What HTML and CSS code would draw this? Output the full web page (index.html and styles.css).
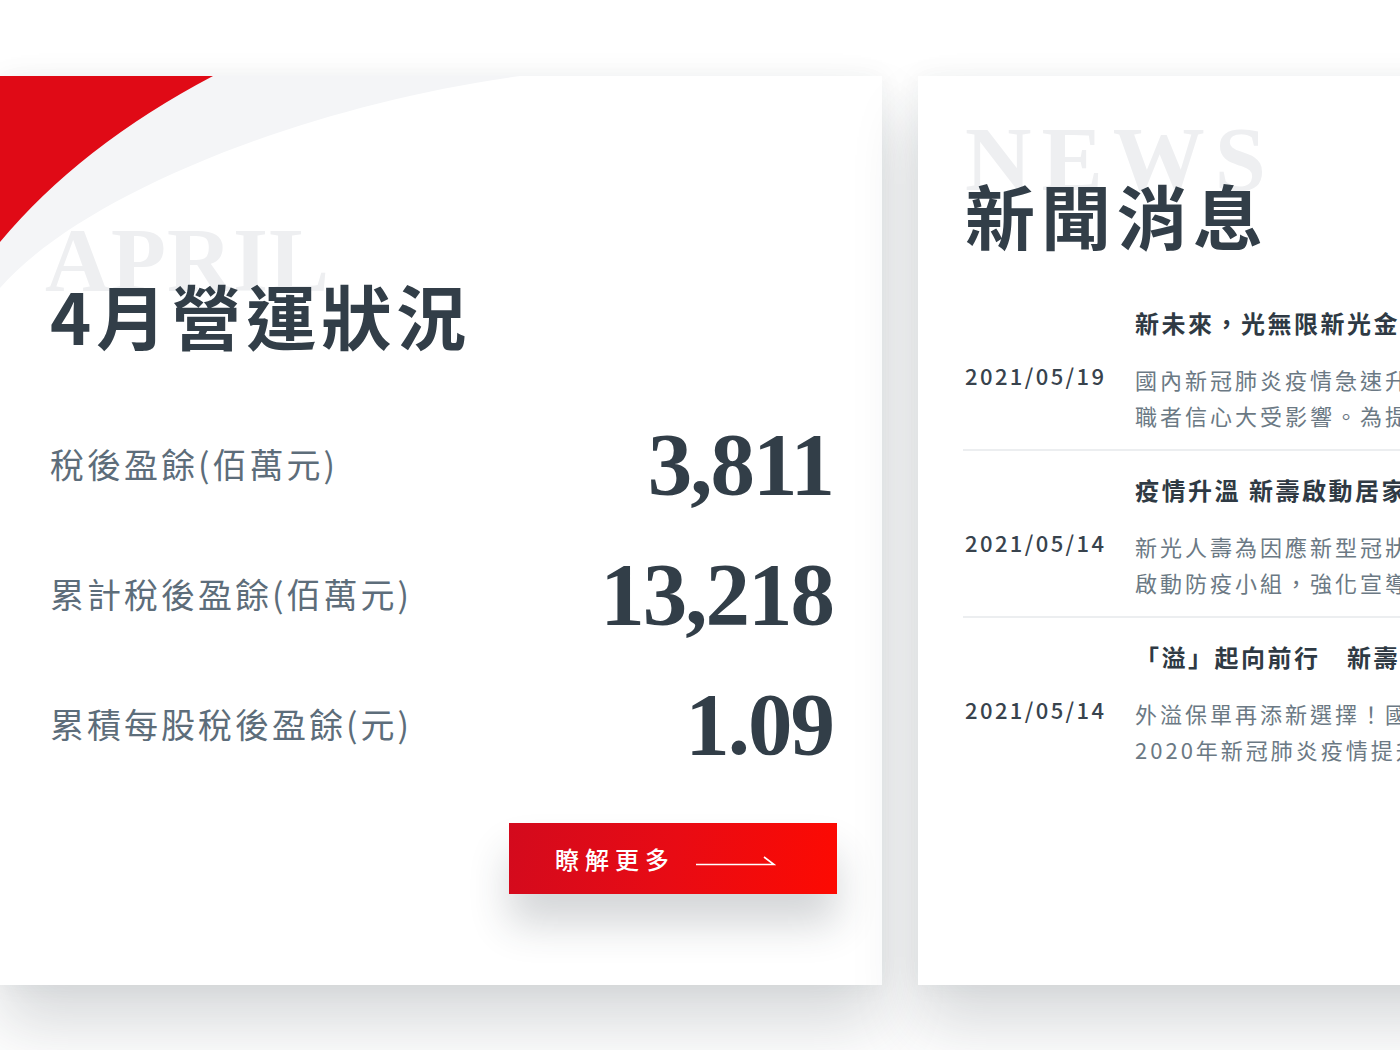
FILE: index.html
```
<!DOCTYPE html>
<html lang="zh-Hant">
<head>
<meta charset="utf-8">
<title>4月營運狀況 / 新聞消息</title>
<link rel="stylesheet" href="styles.css">
</head>
<body>
<div class="page">
  <section class="card report">
    <svg class="swoosh" width="882" height="300" viewBox="0 0 882 300" aria-hidden="true">
      <path d="M0,0 L520,0 C300,30 80,120 0,212 Z" fill="#f4f5f7"/>
      <path d="M0,0 L213,0 Q80,70 0,166 Z" fill="#e00a16"/>
    </svg>
    <div class="heading">
      <span class="watermark wm-april">APRIL</span>
      <h1 class="title">4月營運狀況</h1>
    </div>
    <div class="stats">
      <div class="stat-label">稅後盈餘(佰萬元)</div>
      <div class="stat-value">3,811</div>
      <div class="stat-label">累計稅後盈餘(佰萬元)</div>
      <div class="stat-value">13,218</div>
      <div class="stat-label">累積每股稅後盈餘(元)</div>
      <div class="stat-value">1.09</div>
    </div>
    <div class="actions">
      <a class="more-btn" href="#">
        <span class="more-text">瞭解更多</span>
        <svg class="arrow" width="80" height="12" viewBox="0 0 80 12" aria-hidden="true">
          <path d="M0,10.5 H78 L68,3" fill="none" stroke="#fff" stroke-width="1.6"/>
        </svg>
      </a>
    </div>
  </section>

  <section class="card news">
    <div class="heading">
      <span class="watermark wm-news">NEWS</span>
      <h2 class="title news-title">新聞消息</h2>
    </div>
    <ul class="news-list">
      <li class="news-item">
        <div class="news-date">2021/05/19</div>
        <div class="news-body">
          <div class="news-head">新未來，光無限新光金控全力支持防疫</div>
          <p class="news-desc">國內新冠肺炎疫情急速升溫，民眾對防疫需求大增<br>職者信心大受影響。為提振士氣並守護同仁健康</p>
        </div>
      </li>
      <li class="news-item">
        <div class="news-date">2021/05/14</div>
        <div class="news-body">
          <div class="news-head">疫情升溫 新壽啟動居家辦公分流</div>
          <p class="news-desc">新光人壽為因應新型冠狀病毒疫情升溫，即刻<br>啟動防疫小組，強化宣導各項防疫措施與應變</p>
        </div>
      </li>
      <li class="news-item">
        <div class="news-date">2021/05/14</div>
        <div class="news-body">
          <div class="news-head">「溢」起向前行　新壽推出外溢保單</div>
          <p class="news-desc">外溢保單再添新選擇！國人健康意識抬頭，<br>2020年新冠肺炎疫情提升民眾對健康的重視</p>
        </div>
      </li>
    </ul>
  </section>
</div>
</body>
</html>
```

FILE: styles.css
```
html, body {
  margin: 0;
  padding: 0;
  background: #ffffff;
}

body {
  width: 1400px;
  height: 1050px;
  overflow: hidden;
  font-family: "Noto Sans CJK TC", "Noto Sans", sans-serif;
  color: #323e48;
}

.page {
  display: flex;
  gap: 36px;
  padding-top: 76px;
  width: 1400px;
  box-sizing: border-box;
}

.card {
  position: relative;
  flex-shrink: 0;
  height: 909px;
  background: #ffffff;
  box-shadow: 0 40px 60px rgba(40, 50, 60, 0.18), 0 0 24px rgba(40, 50, 60, 0.05);
  box-sizing: border-box;
}

.report {
  width: 882px;
  padding: 204px 45px 0 50px;
  overflow: hidden;
}

.swoosh {
  position: absolute;
  left: 0;
  top: 0;
}

.heading {
  position: relative;
}

.watermark {
  position: absolute;
  font-family: "Liberation Serif", "Times New Roman", serif;
  font-weight: 700;
  line-height: 1;
  color: #eeeff1;
  white-space: nowrap;
}

.wm-april {
  top: -64px;
  left: -5px;
  font-size: 90px;
  letter-spacing: 1px;
}

.title {
  position: relative;
  margin: 0;
  font-family: "Noto Sans CJK TC", sans-serif;
  font-weight: 700;
  font-size: 70px;
  line-height: 1;
  letter-spacing: 5px;
  color: #323e48;
}

.stats {
  display: grid;
  grid-template-columns: 1fr auto;
  grid-auto-rows: 130px;
  align-items: center;
  margin-top: 49px;
  position: relative;
}

.stat-label {
  font-size: 34px;
  line-height: 1;
  letter-spacing: 3px;
  color: #5d6d7a;
  font-weight: 400;
}

.stat-value {
  font-family: "Liberation Serif", "Times New Roman", serif;
  font-weight: 700;
  font-size: 89px;
  line-height: 1;
  letter-spacing: -2px;
  color: #323e48;
  text-align: right;
  padding-right: 4px;
}

.actions {
  display: flex;
  justify-content: flex-end;
  margin-top: 34px;
}

.more-btn {
  display: flex;
  align-items: center;
  width: 328px;
  height: 71px;
  box-sizing: border-box;
  padding-left: 46px;
  gap: 21px;
  text-decoration: none;
  color: #ffffff;
  background: linear-gradient(100deg, #d30a1d 0%, #e80b14 50%, #fd0a02 100%);
  box-shadow: 0 30px 40px rgba(40, 50, 60, 0.2);
}

.more-text {
  font-size: 24px;
  font-weight: 500;
  letter-spacing: 6px;
  line-height: 1;
}

.arrow {
  display: block;
  margin-top: 2px;
}

/* News card */
.news {
  width: 720px;
  padding: 104px 0 0 47px;
}

.wm-news {
  top: -67px;
  left: 0;
  font-size: 92px;
  letter-spacing: 10px;
}

.news-title {
  letter-spacing: 6px;
}

.news-list {
  list-style: none;
  margin: 34px 0 0 -2px;
  padding: 0;
}

.news-item {
  display: grid;
  grid-template-columns: 172px 1fr;
  align-items: center;
  padding: 21px 0 16px 0;
  border-bottom: 2px solid #eceef0;
}

.news-item:last-child {
  border-bottom: none;
}

.news-date {
  padding-left: 2px;
  padding-top: 12px;
  font-size: 22px;
  font-weight: 500;
  letter-spacing: 2.4px;
  color: #38434d;
  line-height: 1;
}

.news-head {
  font-size: 24px;
  font-weight: 700;
  line-height: 36px;
  letter-spacing: 2.5px;
  color: #2f3a44;
  white-space: nowrap;
}

.news-desc {
  margin: 20px 0 0 0;
  font-size: 22px;
  font-weight: 400;
  line-height: 36px;
  letter-spacing: 3px;
  color: #6b7984;
  white-space: nowrap;
}
```
